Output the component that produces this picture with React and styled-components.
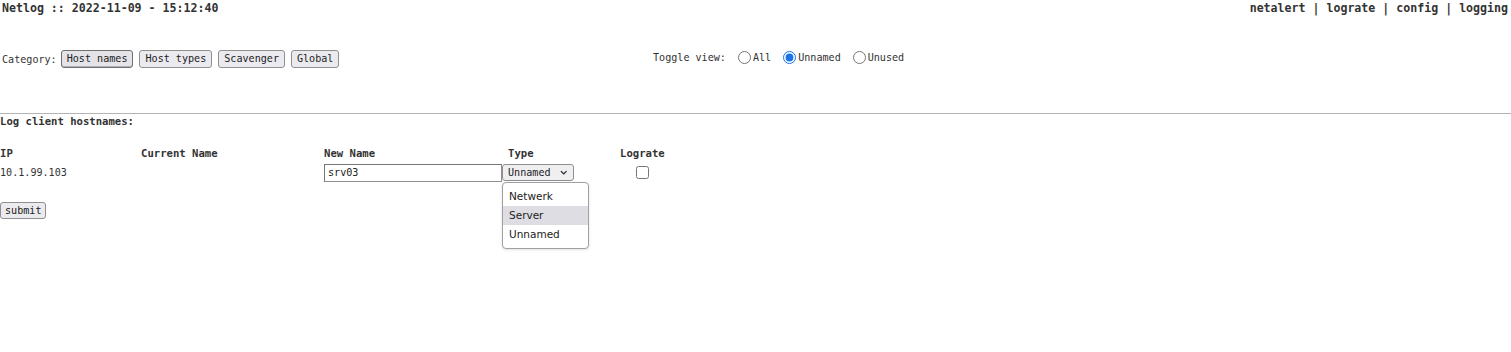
import styled, { createGlobalStyle } from 'styled-components';

const Global = createGlobalStyle`
  html, body {
    margin: 0;
    padding: 0;
    background: #fff;
  }
  body {
    font-family: "DejaVu Sans Mono", monospace;
    font-size: 10.1px;
    color: #333;
  }
`;

const Page = styled.div`
  width: 1511px;
  height: 352px;
  position: relative;
`;

const TopBar = styled.div`
  display: flex;
  justify-content: space-between;
  align-items: center;
  height: 16px;
  padding: 0 3px 0 2px;
  font-size: 11.6px;
  font-weight: bold;
`;

const Nav = styled.div`
  display: flex;
  white-space: pre;
`;

const NavLink = styled.a`
  color: #333;
  text-decoration: none;
`;

const Controls = styled.div`
  display: flex;
  align-items: center;
  height: 20px;
  margin-top: 33px;
  padding-left: 2px;
`;

const Category = styled.div`
  display: flex;
  align-items: center;
  gap: 6px;
  width: 651px;
`;

const CategoryLabel = styled.span`
  margin-right: -2px;
`;

const Button = styled.button`
  font-family: "DejaVu Sans Mono", monospace;
  font-size: 10.1px;
  color: #222;
  height: 18px;
  padding: 0 5px;
  margin: 0;
  border: 1px solid ${(p) => (p.active ? '#707070' : '#8f8f8f')};
  border-radius: 3px;
  background: ${(p) => (p.active ? '#e3e3e8' : '#ebebef')};
  box-shadow: ${(p) => (p.active ? 'inset 0 -1px 0 #b0b0b0' : 'none')};
  line-height: 16px;
`;

const Toggle = styled.div`
  display: flex;
  align-items: center;
  margin-top: -4px;
`;

const RadioLabel = styled.label`
  display: flex;
  align-items: center;
  margin-left: 12px;
`;

const Radio = styled.input`
  width: 13px;
  height: 13px;
  margin: 0 2px 0 0;
  accent-color: #1a73e8;
`;

const Rule = styled.hr`
  margin: 44px 0 0;
  border: 0;
  border-top: 1px solid #b4b4b4;
`;

const Heading = styled.div`
  font-size: 10.6px;
  font-weight: bold;
  height: 15px;
  line-height: 15px;
`;

const Table = styled.div`
  display: grid;
  grid-template-columns: 141px 183px 178px 118px 46px;
  margin-top: 17px;
`;

const Th = styled.div`
  font-size: 10.6px;
  font-weight: bold;
  height: 15px;
  line-height: 15px;
  padding-left: ${(p) => p.pad || 0}px;
`;

const Td = styled.div`
  display: flex;
  align-items: center;
  justify-content: ${(p) => (p.center ? 'center' : 'flex-start')};
  height: 19px;
  margin-top: 2px;
  position: relative;
`;

const TextInput = styled.input`
  font-family: "DejaVu Sans Mono", monospace;
  font-size: 10.1px;
  color: #222;
  width: 178px;
  height: 18px;
  box-sizing: border-box;
  padding: 0 3px;
  margin: 0;
  border: 1px solid #8f8f8f;
  border-top-color: #767676;
  border-left-color: #767676;
  border-radius: 0;
  outline: none;
`;

const SelectBox = styled.div`
  display: flex;
  align-items: center;
  gap: 9px;
  width: 72px;
  height: 17px;
  box-sizing: border-box;
  padding: 0 6px 0 5px;
  border: 1px solid #8f8f8f;
  border-radius: 3px;
  background: #efeff2;
  color: #222;
`;

const Chevron = styled.svg`
  width: 8px;
  height: 5px;
`;

const Check = styled.input`
  width: 13px;
  height: 13px;
  margin: 0 0 0 -2px;
`;

const Menu = styled.ul`
  position: absolute;
  left: 0;
  top: 19px;
  margin: 0;
  padding: 4px 0;
  list-style: none;
  width: 87px;
  box-sizing: border-box;
  background: #fff;
  border: 1px solid #a0a0a0;
  border-radius: 4px;
  box-shadow: 0 1px 3px rgba(0, 0, 0, 0.12);
  font-family: "DejaVu Sans", sans-serif;
  font-size: 10.5px;
  color: #222;
  z-index: 2;
`;

const MenuItem = styled.li`
  height: 19px;
  line-height: 19px;
  padding-left: 6px;
  background: ${(p) => (p.selected ? '#dedde3' : 'transparent')};
`;

const Submit = styled(Button)`
  display: block;
  height: 17px;
  margin-top: 20px;
  padding: 0 4px;
`;

const links = ['netalert', 'lograte', 'config', 'logging'];

export default function App() {
  return (
    <Page>
      <Global />
      <TopBar>
        <span>Netlog :: 2022-11-09 - 15:12:40</span>
        <Nav>
          {links.map((l, i) => (
            <span key={l}>
              {i > 0 && ' | '}
              <NavLink href="#">{l}</NavLink>
            </span>
          ))}
        </Nav>
      </TopBar>

      <Controls>
        <Category>
          <CategoryLabel>Category:</CategoryLabel>
          <Button active>Host names</Button>
          <Button>Host types</Button>
          <Button>Scavenger</Button>
          <Button>Global</Button>
        </Category>
        <Toggle>
          <span>Toggle view:</span>
          <RadioLabel>
            <Radio type="radio" name="view" />
            All
          </RadioLabel>
          <RadioLabel>
            <Radio type="radio" name="view" defaultChecked />
            Unnamed
          </RadioLabel>
          <RadioLabel>
            <Radio type="radio" name="view" />
            Unused
          </RadioLabel>
        </Toggle>
      </Controls>

      <Rule />
      <Heading>Log client hostnames:</Heading>

      <Table>
        <Th>IP</Th>
        <Th>Current Name</Th>
        <Th>New Name</Th>
        <Th pad={6}>Type</Th>
        <Th>Lograte</Th>

        <Td>10.1.99.103</Td>
        <Td />
        <Td>
          <TextInput defaultValue="srv03" />
        </Td>
        <Td>
          <SelectBox>
            Unnamed
            <Chevron viewBox="0 0 8 5">
              <path d="M1 1l3 3 3-3" fill="none" stroke="#222" strokeWidth="1.3" />
            </Chevron>
          </SelectBox>
          <Menu>
            <MenuItem>Netwerk</MenuItem>
            <MenuItem selected>Server</MenuItem>
            <MenuItem>Unnamed</MenuItem>
          </Menu>
        </Td>
        <Td center>
          <Check type="checkbox" />
        </Td>
      </Table>

      <Submit>submit</Submit>
    </Page>
  );
}
